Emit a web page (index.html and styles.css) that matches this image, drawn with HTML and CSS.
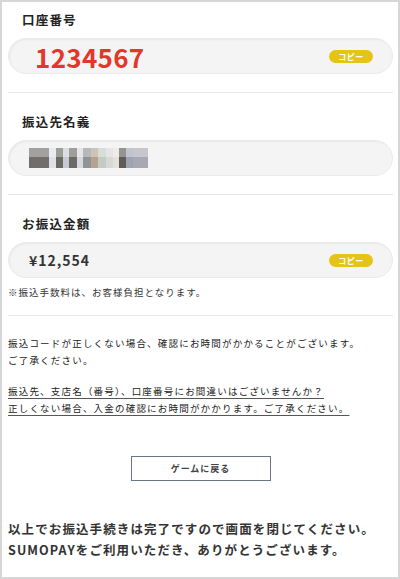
FILE: index.html
```html
<!DOCTYPE html>
<html lang="ja">
<head>
  <meta charset="UTF-8">
  <meta name="viewport" content="width=device-width, initial-scale=1.0">
  <title>お振込情報</title>
  <link rel="stylesheet" href="styles.css">
</head>
<body>

  <div class="page">

    <!-- 口座番号 -->
    <div class="section first">
      <div class="label">口座番号</div>
      <div class="field">
        <span class="value account">1234567</span>
        <button class="copy-btn">コピー</button>
      </div>
    </div>

    <!-- 振込先名義 (masked) -->
    <div class="section">
      <div class="label">振込先名義</div>
      <div class="field">
        <span class="mosaic"></span>
      </div>
    </div>

    <!-- お振込金額 -->
    <div class="section last">
      <div class="label">お振込金額</div>
      <div class="field">
        <span class="value amount">¥12,554</span>
        <button class="copy-btn">コピー</button>
      </div>
      <p class="note">※振込手数料は、お客様負担となります。</p>
    </div>

    <div class="notice">
      <p>振込コードが正しくない場合、確認にお時間がかかることがございます。<br>ご了承ください。</p>
      <p class="underline">振込先、支店名（番号）、口座番号にお間違いはございませんか？<br>正しくない場合、入金の確認にお時間がかかります。ご了承ください。</p>
    </div>

    <div class="actions">
      <button class="back-btn">ゲームに戻る</button>
    </div>

    <p class="thanks">以上でお振込手続きは完了ですので画面を閉じてください。<br>SUMOPAYをご利用いただき、ありがとうございます。</p>
  </div>

</body>
</html>
```

FILE: styles.css
```css
* {
  box-sizing: border-box;
}
body {
  margin: 0;
  font-family: "Noto Sans CJK JP", "Noto Sans", sans-serif;
  color: #333;
  background: #fff;
}
.page {
  width: 400px;
  height: 579px;
  border: 2px solid #d6d6d6;
  padding: 0 5px 0 6px;
  overflow: hidden;
}
.section {
  padding: 21px 0 18px;
  border-bottom: 1px solid #e6e6e6;
}
.section.first {
  padding-top: 10px;
}
.section.last {
  padding-bottom: 16px;
}
.label {
  padding-left: 14px;
  font-size: 12.5px;
  line-height: 16px;
  font-weight: bold;
  letter-spacing: 1.2px;
  color: #222;
}
.field {
  display: flex;
  align-items: center;
  justify-content: space-between;
  height: 36px;
  margin-top: 10px;
  padding: 0 19px 0 20px;
  background: #f4f4f4;
  border: 1px solid #ebebeb;
  border-radius: 18px;
  box-shadow: inset 1px 1px 2px rgba(0, 0, 0, 0.05);
}
.value {
  font-weight: bold;
}
.value.account {
  padding-left: 6px;
  font-size: 26px;
  color: #e2372a;
  letter-spacing: 0.3px;
}
.value.amount {
  font-size: 14px;
  letter-spacing: 1px;
  color: #333;
}
.copy-btn {
  width: 44px;
  height: 13px;
  padding: 0;
  border: none;
  border-radius: 7px;
  background: #e6c417;
  color: #fff;
  font-family: inherit;
  font-size: 8px;
  font-weight: bold;
  line-height: 13px;
  letter-spacing: 0.5px;
}
.mosaic {
  display: block;
  width: 119px;
  height: 20px;
  background:
    linear-gradient(rgba(255, 255, 255, 0.35) 0 45%, transparent 45%),
    linear-gradient(to right,
      #6f6e6a 0 20px, #dde1e6 20px 27px, #6a6a62 27px 34px, #c6cbd2 34px 40px,
      #6c6a66 40px 48px, #d5d8dc 48px 54px, #8f9296 54px 62px, #b5a38d 62px 69px,
      #c4cac4 69px 77px, #d7d9d4 77px 84px, #e4e2da 84px 90px, #5e5b58 90px 97px,
      #9ea4b3 97px 104px, #a7a8b2 104px 119px);
}
.note {
  margin: 8px 0 0;
  font-size: 9.5px;
  line-height: 13px;
  letter-spacing: 1px;
  color: #333;
}
.notice {
  padding-top: 10px;
}
.notice p {
  margin: 9px 0 0;
  font-size: 9.5px;
  line-height: 17px;
  letter-spacing: 1.2px;
  color: #222;
}
.notice p + p {
  margin-top: 14px;
}
.notice .underline {
  text-decoration: underline;
  text-decoration-color: #555;
  text-underline-offset: 3px;
}
.actions {
  display: flex;
  justify-content: center;
  margin-top: 39px;
}
.back-btn {
  width: 140px;
  height: 25px;
  padding: 0;
  background: #fff;
  border: 1px solid #6b7680;
  font-family: inherit;
  font-size: 9px;
  font-weight: bold;
  letter-spacing: 1px;
  color: #444;
}
.thanks {
  margin: 37px 0 0;
  font-size: 12.5px;
  font-weight: bold;
  line-height: 21px;
  letter-spacing: 1.1px;
  color: #333;
}
```
